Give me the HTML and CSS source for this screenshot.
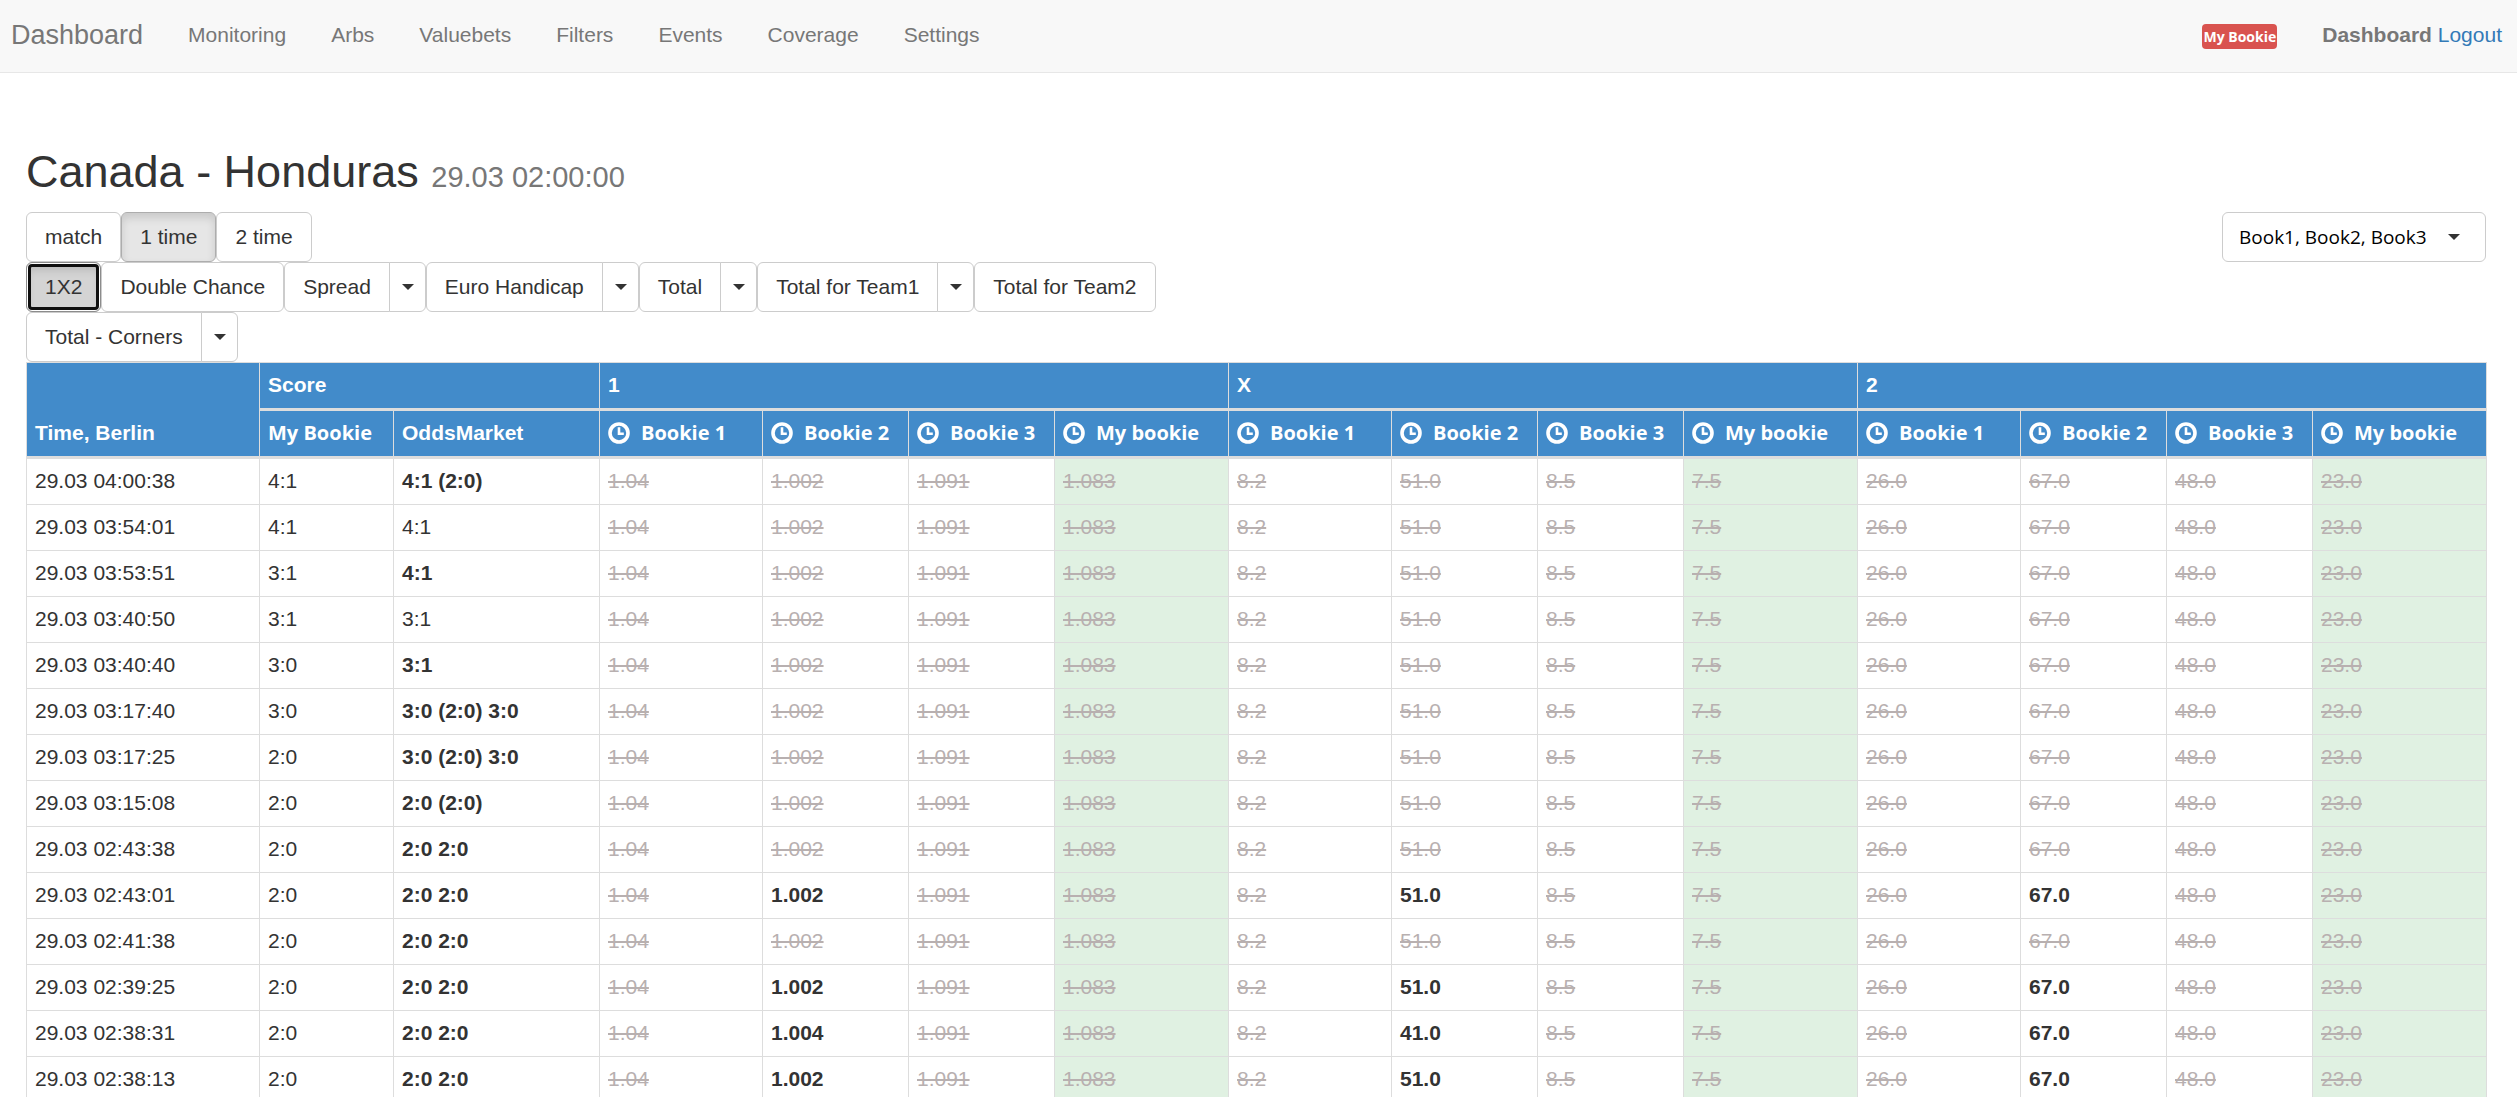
FILE: index.html
```html
<!DOCTYPE html>
<html lang="en">
<head>
<meta charset="utf-8">
<meta name="viewport" content="width=device-width, initial-scale=1">
<title>Canada - Honduras</title>
<link rel="stylesheet" href="styles.css">
</head>
<body>
<svg class="sprite" aria-hidden="true">
  <symbol id="clock" viewBox="0 0 22 22">
    <circle cx="11" cy="11" r="9" fill="none" stroke="currentColor" stroke-width="3.6"/>
    <path d="M11 5.2v6.6h4.8" fill="none" stroke="currentColor" stroke-width="2.6"/>
  </symbol>
</svg>
<header class="navbar">
  <a class="brand" href="#">Dashboard</a>
  <nav class="nav">
    <a href="#">Monitoring</a>
    <a href="#">Arbs</a>
    <a href="#">Valuebets</a>
    <a href="#">Filters</a>
    <a href="#">Events</a>
    <a href="#">Coverage</a>
    <a href="#">Settings</a>
  </nav>
  <div class="account">
    <span class="badge">My Bookie</span>
    <span><strong>Dashboard</strong> <a href="#">Logout</a></span>
  </div>
</header>
<main class="page">
  <h1 class="title">Canada - Honduras <small>29.03 02:00:00</small></h1>
  <div class="toolbar">
    <div class="markets">
      <div class="btn-row">
        <button class="btn" type="button">match</button>
        <button class="btn active" type="button">1 time</button>
        <button class="btn" type="button">2 time</button>
      </div>
      <div class="btn-row">
        <button class="btn selected" type="button">1X2</button>
        <button class="btn" type="button">Double Chance</button>
        <div class="split"><button class="btn" type="button">Spread</button><button class="btn toggle" type="button" aria-label="Spread options"></button></div>
        <div class="split"><button class="btn" type="button">Euro Handicap</button><button class="btn toggle" type="button" aria-label="Euro Handicap options"></button></div>
        <div class="split"><button class="btn" type="button">Total</button><button class="btn toggle" type="button" aria-label="Total options"></button></div>
        <div class="split"><button class="btn" type="button">Total for Team1</button><button class="btn toggle" type="button" aria-label="Total for Team1 options"></button></div>
        <button class="btn" type="button">Total for Team2</button>
        <div class="split"><button class="btn" type="button">Total - Corners</button><button class="btn toggle" type="button" aria-label="Total - Corners options"></button></div>
      </div>
    </div>
    <label class="picker"><select aria-label="Bookmakers"><option>Book1, Book2, Book3</option></select></label>
  </div>
  <table class="odds">
    <colgroup>
      <col class="w-time"><col class="w-score"><col class="w-market">
      <col class="w-first"><col class="w-book"><col class="w-book"><col class="w-mine">
      <col class="w-first"><col class="w-book"><col class="w-book"><col class="w-mine">
      <col class="w-first"><col class="w-book"><col class="w-book"><col class="w-mine">
    </colgroup>
    <thead>
      <tr><th rowspan="2">Time, Berlin</th><th colspan="2">Score</th><th colspan="4">1</th><th colspan="4">X</th><th colspan="4">2</th></tr>
      <tr id="books"><th class="book">My Bookie</th><th>OddsMarket</th></tr>
    </thead>
    <tbody id="history"></tbody>
  </table>
</main>
<script src="odds.js"></script>
</body>
</html>
```
FILE: odds.js
```js
const books = ["Bookie 1", "Bookie 2", "Bookie 3", "My bookie"];
const base = ["1.04", "1.002", "1.091", "1.083", "8.2", "51.0", "8.5", "7.5", "26.0", "67.0", "48.0", "23.0"];

// time, score, market score, market score changed, live odds of Bookie 2 for 1 / X / 2
const rows = [
  ["29.03 04:00:38", "4:1", "4:1 (2:0)", true],
  ["29.03 03:54:01", "4:1", "4:1", false],
  ["29.03 03:53:51", "3:1", "4:1", true],
  ["29.03 03:40:50", "3:1", "3:1", false],
  ["29.03 03:40:40", "3:0", "3:1", true],
  ["29.03 03:17:40", "3:0", "3:0 (2:0) 3:0", true],
  ["29.03 03:17:25", "2:0", "3:0 (2:0) 3:0", true],
  ["29.03 03:15:08", "2:0", "2:0 (2:0)", true],
  ["29.03 02:43:38", "2:0", "2:0 2:0", true],
  ["29.03 02:43:01", "2:0", "2:0 2:0", true, ["1.002", "51.0", "67.0"]],
  ["29.03 02:41:38", "2:0", "2:0 2:0", true],
  ["29.03 02:39:25", "2:0", "2:0 2:0", true, ["1.002", "51.0", "67.0"]],
  ["29.03 02:38:31", "2:0", "2:0 2:0", true, ["1.004", "41.0", "67.0"]],
  ["29.03 02:38:13", "2:0", "2:0 2:0", true, ["1.002", "51.0", "67.0"]]
];

const head = document.getElementById("books");
for (let group = 0; group < 3; group++) {
  for (const name of books) {
    head.insertAdjacentHTML("beforeend",
      `<th class="book"><span class="book-name"><svg class="clock" aria-hidden="true"><use href="#clock"/></svg>${name}</span></th>`);
  }
}

document.getElementById("history").innerHTML = rows.map(([time, score, market, changed, live]) => {
  const odds = base.map((value, i) => {
    if (live && i % 4 === 1) return `<td><b>${live[(i - 1) / 4]}</b></td>`;
    return `<td${i % 4 === 3 ? ' class="mine"' : ""}><del>${value}</del></td>`;
  }).join("");
  return `<tr><td>${time}</td><td>${score}</td><td>${changed ? `<b>${market}</b>` : market}</td>${odds}</tr>`;
}).join("");
```
FILE: styles.css
```css
* { box-sizing: border-box; }

body {
  margin: 0;
  background: #fff;
  color: #333;
  font: 21px/30px "Liberation Sans", Arial, sans-serif;
}

a { color: #337ab7; text-decoration: none; }
.sprite { display: none; }

.navbar {
  display: flex;
  align-items: center;
  gap: 45px;
  min-height: 73px;
  padding: 0 15px 2px 11px;
  background: #f8f8f8;
  border-bottom: 1px solid #e7e7e7;
  color: #777;
}
.brand { color: #777; font-size: 27px; }
.nav { display: flex; gap: 45px; }
.nav a { color: #777; }
.account {
  display: flex;
  align-items: center;
  gap: 45px;
  margin-left: auto;
}
.badge {
  padding: 0 1px;
  border-radius: 4px;
  background: #d9534f;
  color: #fff;
  font: 700 14px/25px "Open Sans", sans-serif;
  margin-top: 2px;
}

.page { padding: 75px 31px 0 26px; }
.title {
  margin: 0 0 11px;
  font-size: 45px;
  line-height: 48px;
  font-weight: 400;
}
.title small { color: #777; font-size: 29px; }

.toolbar {
  display: flex;
  justify-content: space-between;
  align-items: flex-start;
}
.markets { width: 50%; }
.btn-row { display: flex; flex-wrap: wrap; }
.split { display: flex; }

.btn {
  height: 50px;
  padding: 0 18px;
  border: 1px solid #ccc;
  border-radius: 6px;
  background: #fff;
  color: #333;
  font: inherit;
}
.btn.active {
  background: #e6e6e6;
  border-color: #adadad;
  box-shadow: inset 0 5px 8px rgba(0, 0, 0, .125);
}
.btn.selected {
  background: #d4d4d4;
  border-color: #8c8c8c;
  box-shadow: inset 0 0 0 2px #fff, inset 0 7px 8px rgba(0, 0, 0, .125);
  outline: 3px solid #101010;
  outline-offset: -5px;
}
.split .btn:first-child { border-radius: 6px 0 0 6px; }
.split .toggle {
  width: 37px;
  margin-left: -1px;
  padding: 0 12px;
  border-radius: 0 6px 6px 0;
}
.toggle::before, .picker::after {
  content: "";
  display: block;
  border: 6px solid transparent;
  border-top-color: #333;
  border-bottom: 0;
}

.picker {
  display: grid;
  align-items: center;
  width: 264px;
}
.picker select {
  grid-area: 1 / 1;
  height: 50px;
  padding: 0 16px;
  border: 1px solid #ccc;
  border-radius: 6px;
  background: #fff;
  color: #000;
  font: 19px/30px "Open Sans", sans-serif;
  appearance: none;
}
.picker::after {
  grid-area: 1 / 1;
  justify-self: end;
  margin-right: 26px;
  pointer-events: none;
}

.odds {
  width: 100%;
  table-layout: fixed;
  border-collapse: separate;
  border-spacing: 0;
  border: solid #ddd;
  border-width: 1px 1px 0 0;
}
.w-time { width: 233px; }
.w-score { width: 134px; }
.w-market { width: 206px; }
.w-first { width: 163px; }
.w-book { width: 146px; }
.w-mine { width: 174px; }

.odds th, .odds td {
  padding: 7px 7px 8px 8px;
  border: solid #ddd;
  border-width: 0 0 1px 1px;
  text-align: left;
  white-space: nowrap;
}
.odds th {
  border-bottom-width: 3px;
  background: #428bca;
  color: #fff;
  vertical-align: bottom;
}
.odds .book {
  font-family: "Open Sans", sans-serif;
  font-size: 20px;
  font-weight: 700;
}
.book-name { display: flex; align-items: center; gap: 11px; }
.clock { width: 22px; height: 22px; }
.odds .mine { background: #e0f1e2; }
.odds del { color: #b8b0b0; text-decoration-thickness: 2px; }
```
